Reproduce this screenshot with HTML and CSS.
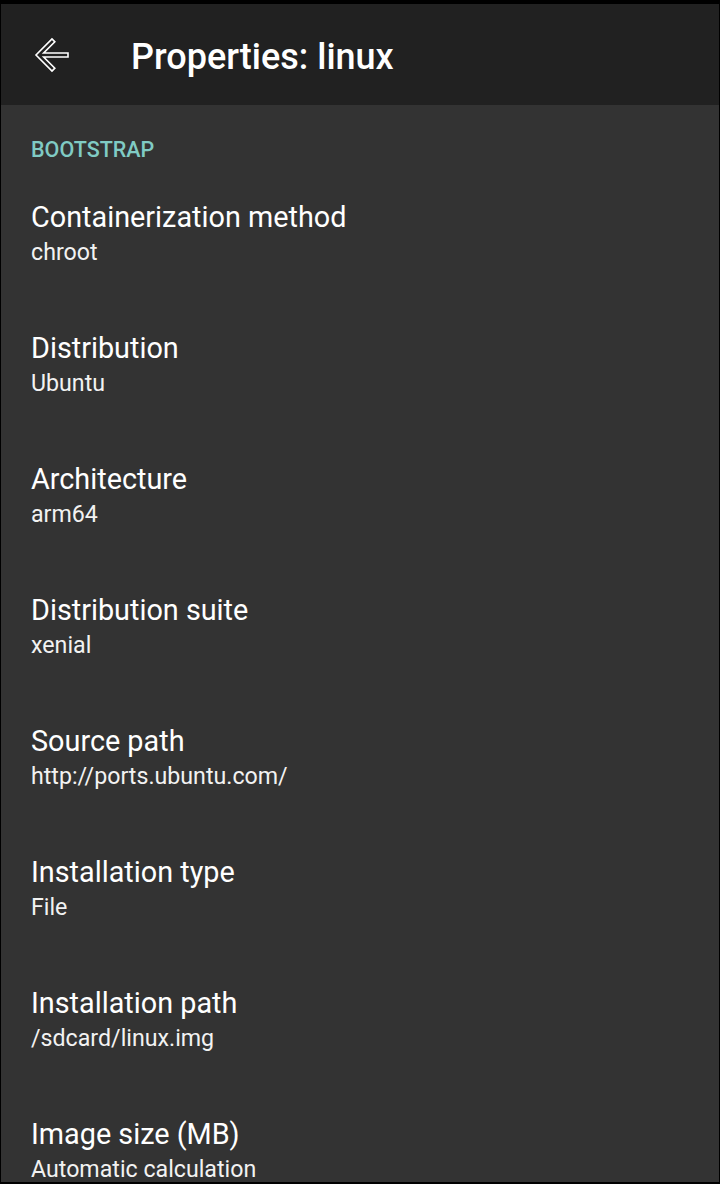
FILE: index.html
```html
<!DOCTYPE html>
<html>
<head>
<meta charset="utf-8">
<link rel="stylesheet" href="styles.css">
</head>
<body>
<div class="screen">
  <header class="toolbar">
    <svg class="back" width="48" height="48" viewBox="0 0 24 24">
      <path d="M20 11H7.83l5.59-5.59L12 4l-8 8 8 8 1.41-1.41L7.83 13H20v-2z" fill="#212121" stroke="#ffffff" stroke-width="0.8" stroke-linejoin="miter"/>
    </svg>
    <h1 class="title">Properties: linux</h1>
  </header>
  <main class="prefs">
    <div class="category">BOOTSTRAP</div>
    <div class="item"><div class="item-title">Containerization method</div><div class="item-summary">chroot</div></div>
    <div class="item"><div class="item-title">Distribution</div><div class="item-summary">Ubuntu</div></div>
    <div class="item"><div class="item-title">Architecture</div><div class="item-summary">arm64</div></div>
    <div class="item"><div class="item-title">Distribution suite</div><div class="item-summary">xenial</div></div>
    <div class="item"><div class="item-title">Source path</div><div class="item-summary">http://ports.ubuntu.com/</div></div>
    <div class="item"><div class="item-title">Installation type</div><div class="item-summary">File</div></div>
    <div class="item"><div class="item-title">Installation path</div><div class="item-summary">/sdcard/linux.img</div></div>
    <div class="item"><div class="item-title">Image size (MB)</div><div class="item-summary">Automatic calculation</div></div>
  </main>
</div>
</body>
</html>
```

FILE: styles.css
```css
html, body {
  margin: 0;
  padding: 0;
  background: #000;
}
body {
  width: 720px;
  height: 1184px;
  overflow: hidden;
  font-family: Roboto, "Noto Sans", sans-serif;
}
.screen {
  box-sizing: border-box;
  width: 720px;
  height: 1184px;
  padding: 4px 1px 2px 1px;
  display: flex;
  flex-direction: column;
}
.toolbar {
  flex: 0 0 101px;
  background: #212121;
  display: flex;
  align-items: center;
}
.back {
  margin-left: 27px;
  flex: 0 0 auto;
}
.title {
  margin: 0 0 0 55px;
  font-size: 36px;
  font-weight: 500;
  color: #fff;
  line-height: 1;
  padding-top: 4px;
}
.prefs {
  flex: 1 1 auto;
  background: #333333;
  overflow: hidden;
}
.category {
  padding: 33px 0 6px 30px;
  font-size: 21.5px;
  line-height: 24px;
  font-weight: 500;
  color: #80cbc4;
}
.item {
  box-sizing: border-box;
  height: 131px;
  padding: 31px 0 0 30px;
}
.item-title {
  font-size: 28.8px;
  line-height: 36px;
  color: #ffffff;
}
.item-summary {
  font-size: 23.2px;
  line-height: 34px;
  color: #f2f2f2;
}
```
